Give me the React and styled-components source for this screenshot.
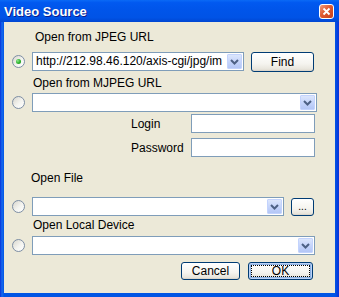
import React from 'react';
import styled, { createGlobalStyle } from 'styled-components';

const GlobalStyle = createGlobalStyle`
  body {
    margin: 0;
    padding: 0;
    font-family: 'Liberation Sans', Arial, sans-serif;
    font-size: 12px;
    color: #000;
  }
`;

const Window = styled.div`
  width: 339px;
  height: 297px;
  box-sizing: border-box;
  display: flex;
  flex-direction: column;
  background: linear-gradient(to right, #0831d9 0px, #166aee 2px, #0055e5 4px, #0055e5 calc(100% - 4px), #0831d9 100%);
`;

const TitleBar = styled.div`
  height: 22px;
  flex: 0 0 22px;
  display: flex;
  align-items: center;
  justify-content: space-between;
  padding: 0 5px 0 4px;
  background: linear-gradient(to bottom, #0a6af6 0%, #0159f0 12%, #0055ea 45%, #0053e6 80%, #0046d2 100%);
`;

const Title = styled.span`
  font-family: 'Liberation Sans', Arial, sans-serif;
  font-weight: bold;
  font-size: 13px;
  color: #fff;
  text-shadow: 1px 1px 0 #0a1e8c;
`;

const CloseButton = styled.div`
  width: 15px;
  height: 15px;
  box-sizing: border-box;
  border: 1px solid #fff;
  border-radius: 3px;
  background: linear-gradient(135deg, #ec9a7e 0%, #e05a30 45%, #c6411b 100%);
  display: flex;
  align-items: center;
  justify-content: center;
`;

const Body = styled.div`
  flex: 1;
  margin: 0 4px 4px 4px;
  background: #ece9d8;
  padding-top: 8px;
  display: flex;
  flex-direction: column;
`;

const Label = styled.div`
  height: 14px;
  line-height: 14px;
  padding-left: ${(p) => p.$indent}px;
  margin-top: ${(p) => p.$top || 0}px;
  white-space: nowrap;
`;

const OptionRow = styled.div`
  display: flex;
  align-items: center;
  height: 19px;
  padding-left: 8px;
  margin-top: ${(p) => p.$top || 0}px;
`;

const Radio = styled.span`
  width: 13px;
  height: 13px;
  box-sizing: border-box;
  border-radius: 50%;
  border: 1px solid #7d8ea4;
  background: linear-gradient(135deg, #d8d6cd 0%, #f4f4f0 55%, #ffffff 100%);
  margin-right: 7px;
  display: flex;
  align-items: center;
  justify-content: center;
  flex: 0 0 13px;

  &::after {
    content: '';
    display: ${(p) => (p.$checked ? 'block' : 'none')};
    width: 5px;
    height: 5px;
    border-radius: 50%;
    background: radial-gradient(circle at 35% 35%, #8ee88e 0%, #31b531 50%, #168c16 100%);
  }
`;

const Combo = styled.div`
  width: ${(p) => p.$width}px;
  height: 19px;
  box-sizing: border-box;
  border: 1px solid #7f9db9;
  background: #fff;
  display: flex;
  align-items: stretch;
  padding: 1px;
`;

const ComboText = styled.span`
  flex: 1;
  overflow: hidden;
  white-space: nowrap;
  padding-left: 2px;
  line-height: 15px;
`;

const ArrowButton = styled.span`
  width: 15px;
  box-sizing: border-box;
  border: 1px solid #c3d3fd;
  border-radius: 1px;
  background: linear-gradient(to bottom, #dce6fc 0%, #c6d5fb 50%, #b3c6f6 100%);
  display: flex;
  align-items: center;
  justify-content: center;
`;

const Button = styled.div`
  width: ${(p) => p.$width}px;
  height: ${(p) => p.$height || 19}px;
  margin-left: ${(p) => p.$left || 0}px;
  box-sizing: border-box;
  border: 1px solid #003c74;
  border-radius: 3px;
  background: linear-gradient(to bottom, #ffffff 0%, #f5f4ef 60%, #e8e5dc 90%, #d6d0c5 100%);
  display: flex;
  align-items: center;
  justify-content: center;
  font-size: ${(p) => (p.$small ? 10 : 12)}px;
  box-shadow: ${(p) => (p.$default ? 'inset 0 0 0 1px #bcd2f6, inset 0 0 0 2px #8db2e3' : 'none')};
  padding: ${(p) => (p.$default ? '2px' : '0')};
`;

const FocusRing = styled.span`
  flex: 1;
  align-self: stretch;
  border: 1px dotted #000;
  display: flex;
  align-items: center;
  justify-content: center;
`;

const CredRow = styled.div`
  display: flex;
  align-items: center;
  padding-left: 127px;
  margin-top: ${(p) => p.$top}px;
`;

const CredLabel = styled.span`
  width: 60px;
  line-height: 14px;
`;

const TextInput = styled.div`
  width: 124px;
  height: 19px;
  box-sizing: border-box;
  border: 1px solid #7f9db9;
  background: #fff;
`;

const ButtonRow = styled.div`
  display: flex;
  justify-content: flex-end;
  gap: 8px;
  padding-right: 22px;
  margin-top: 7px;
`;

const Chevron = () => (
  <svg width="9" height="6" viewBox="0 0 9 6">
    <polyline points="1,1 4.5,4.5 8,1" fill="none" stroke="#4d6185" strokeWidth="2" />
  </svg>
);

const CloseX = () => (
  <svg width="9" height="9" viewBox="0 0 9 9">
    <path d="M1.5 1.5 L7.5 7.5 M7.5 1.5 L1.5 7.5" stroke="#fff" strokeWidth="1.8" />
  </svg>
);

function ComboBox({ width, text }) {
  return (
    <Combo $width={width}>
      <ComboText>{text}</ComboText>
      <ArrowButton>
        <Chevron />
      </ArrowButton>
    </Combo>
  );
}

function App() {
  return (
    <>
      <GlobalStyle />
      <Window>
        <TitleBar>
          <Title>Video Source</Title>
          <CloseButton>
            <CloseX />
          </CloseButton>
        </TitleBar>
        <Body>
          <Label $indent={31}>Open from JPEG URL</Label>
          <OptionRow $top={8}>
            <Radio $checked />
            <ComboBox width={212} text="http://212.98.46.120/axis-cgi/jpg/im" />
            <Button $width={63} $height={20} $left={7}>Find</Button>
          </OptionRow>
          <Label $indent={29} $top={5}>Open from MJPEG URL</Label>
          <OptionRow $top={3}>
            <Radio />
            <ComboBox width={285} text="" />
          </OptionRow>
          <CredRow $top={2}>
            <CredLabel>Login</CredLabel>
            <TextInput />
          </CredRow>
          <CredRow $top={5}>
            <CredLabel>Password</CredLabel>
            <TextInput />
          </CredRow>
          <Label $indent={27} $top={14}>Open File</Label>
          <OptionRow $top={12}>
            <Radio />
            <ComboBox width={252} text="" />
            <Button $width={23} $height={18} $left={7} $small>...</Button>
          </OptionRow>
          <Label $indent={29} $top={2}>Open Local Device</Label>
          <OptionRow $top={4}>
            <Radio />
            <ComboBox width={283} text="" />
          </OptionRow>
          <ButtonRow>
            <Button $width={59} $height={18}>Cancel</Button>
            <Button $width={65} $height={18} $default>
              <FocusRing>OK</FocusRing>
            </Button>
          </ButtonRow>
        </Body>
      </Window>
    </>
  );
}

export default App;
